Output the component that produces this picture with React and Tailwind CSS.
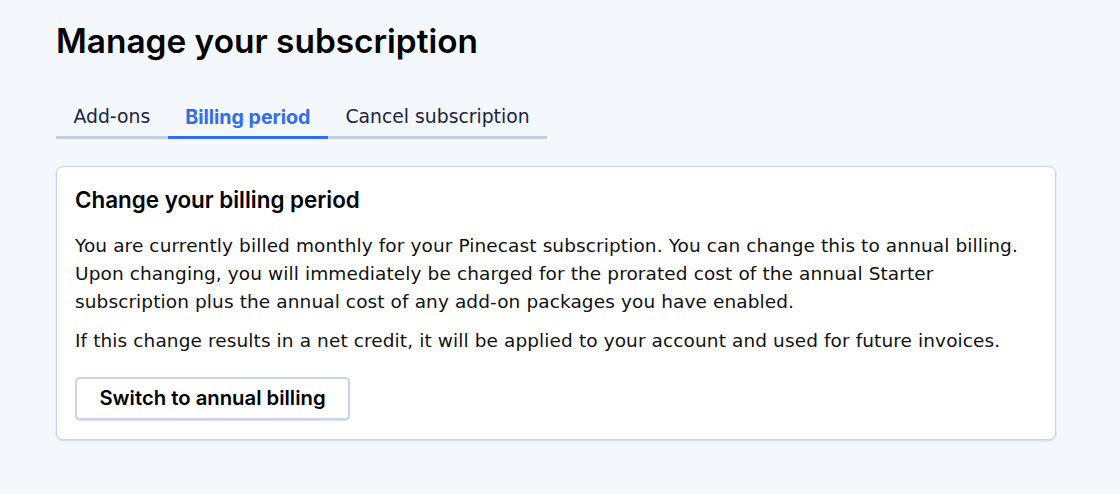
export default function App() {
  const tabs = ['Add-ons', 'Billing period', 'Cancel subscription'];
  const active = 'Billing period';

  return (
    <div className="min-h-[494px] bg-[#f4f7fc] px-14 pt-[21px] font-['DejaVu_Sans',sans-serif] text-[#111]">
      <h1 className="font-['Inter',sans-serif] text-[33.4px] font-semibold leading-[40px] text-black">
        Manage your subscription
      </h1>

      <div className="mt-[42px] flex w-fit border-b-[3px] border-[#c3cde3]">
        {tabs.map((tab) => (
          <div
            key={tab}
            className={
              tab === active
                ? "-mb-[3px] border-b-[3px] border-[#2f6df5] px-[17.5px] pb-[5px] font-['Inter',sans-serif] text-[19.6px] leading-[28px] font-bold text-[#2f6df5]"
                : 'px-[17.5px] pb-[5px] text-[18.8px] leading-[28px] text-[#1b2440]'
            }
          >
            {tab}
          </div>
        ))}
      </div>

      <div className="mt-[27px] w-[1000px] rounded-[7px] border border-[#c5d3ee] bg-white px-[18px] pt-[18px] pb-[19px] shadow-[0_1px_2px_rgba(120,140,180,0.25)]">
        <h2 className="font-['Inter',sans-serif] text-[22.4px] font-semibold leading-[30px] text-black">
          Change your billing period
        </h2>
        <p className="mt-[17px] text-[18.5px] leading-[28px] tracking-[0.1px] text-[#111]">
          You are currently billed monthly for your Pinecast subscription. You can change this to annual billing.
          Upon changing, you will immediately be charged for the prorated cost of the annual Starter subscription plus
          the annual cost of any add-on packages you have enabled.
        </p>
        <p className="mt-[11px] text-[18.5px] leading-[28px] tracking-[0.1px] text-[#111]">
          If this change results in a net credit, it will be applied to your account and used for future invoices.
        </p>
        <button className="mt-[22px] h-[43px] w-[275px] rounded-[5px] border-2 border-[#c9d5ee] bg-white font-['Inter',sans-serif] text-[20.3px] font-semibold text-black shadow-[0_1px_1px_rgba(120,140,180,0.3)]">
          Switch to annual billing
        </button>
      </div>
    </div>
  );
}
